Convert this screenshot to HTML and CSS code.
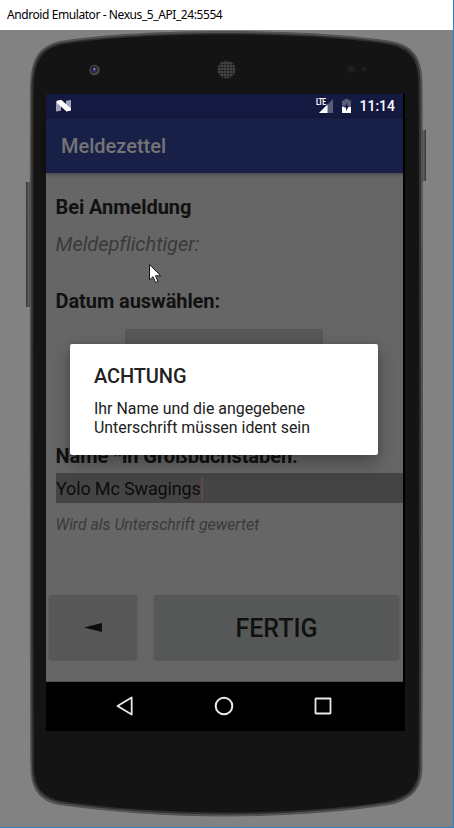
FILE: index.html
```html
<!DOCTYPE html>
<html lang="de">
<head>
<meta charset="utf-8">
<title>Android Emulator - Nexus_5_API_24:5554</title>
<link rel="stylesheet" href="styles.css">
</head>
<body>
<div class="window">
  <header class="titlebar"><span>Android Emulator - Nexus_5_API_24:5554</span></header>
  <main class="device">
    <svg class="shell" width="453" height="797" viewBox="0 30 453 797" aria-hidden="true">
      <defs>
        <linearGradient id="key" x1="0" x2="1" y1="0" y2="0"><stop offset="0" stop-color="#333"/><stop offset=".55" stop-color="#626262"/><stop offset="1" stop-color="#303030"/></linearGradient>
        <pattern id="mesh" width="3" height="3" patternUnits="userSpaceOnUse"><rect width="3" height="3" fill="#484848"/><circle cx="1.5" cy="1.5" r="1.1" fill="#181818"/></pattern>
      </defs>
      <rect x="26" y="182" width="5" height="125" fill="url(#key)"/>
      <rect x="421" y="130" width="5" height="51" fill="url(#key)"/>
      <path d="M30 90C30.500 63 35 47 60 41C105 34 165 31 226 31C285 31 345 34 388 40.500C413 44 422 57 422.500 82C423.200 180 423.200 670 422.500 768C422 790 410 801 389 805C340 812.500 280 816.500 226 816.500C170 816.500 110 812 59 805C40 801 31 790 30.500 768C29.800 670 29.800 180 30 90Z" fill="#505050"/>
      <path d="M31 90C31.500 64 36 48.500 60 42.500C105 35.500 165 32.500 226 32.500C285 32.500 345 35.500 388 42C412 45.500 420.500 58 421 82C421.700 180 421.700 670 421 768C420.500 789 409 799.500 388 803.500C340 811 280 815 226 815C170 815 110 810.500 60 803.500C41 799 32 789 31.500 768C30.800 670 30.800 180 31 90Z" fill="#313131" stroke="#6a6a6a" stroke-width=".5"/>
      <path d="M33.500 90C34 66 38 50 61 44.500C105 37.500 165 34.500 226 34.500C285 34.500 345 37.500 386 44C410 48 418 60 418.500 82C419.200 180 419.200 670 418.500 768C418 787 408 797 387 801.500C340 809 280 812.500 226 812.500C170 812.500 110 808.500 61 801C42 797 34.500 787 34 768C33 670 33 180 33.500 90Z" fill="#141414"/>
      <circle cx="94.500" cy="70" r="5.200" fill="#4c4c4c"/><circle cx="94" cy="69.500" r="3.700" fill="#262637"/><circle cx="94" cy="70" r="1.800" fill="#35358c"/><circle cx="94.500" cy="69" r=".8" fill="#c8c8dd"/>
      <circle cx="226.500" cy="69.500" r="9" fill="url(#mesh)"/>
      <circle cx="351" cy="69" r="4" fill="#1d1d1d"/><circle cx="351" cy="69" r="1.500" fill="#242424"/><circle cx="364" cy="69" r="2.500" fill="#1f1f1f"/>
    </svg>

    <section class="screen">
      <div class="statusbar">
        <svg class="n-logo" width="16" height="12" viewBox="0 0 16 12"><path d="M0 1.200L5 0V10.800L0 11.500ZM10 .7L15 0V10L10 11.500Z" fill="#a1a3b5"/><path d="M1 .7L5.500 0L15 8.500V10.500L10.500 11.500L1 3Z" fill="#fff"/></svg>
        <div class="signal"><span class="lte">LTE</span>
          <svg width="14" height="14" viewBox="0 0 14 14"><path d="M0 14L14 0V14Z" fill="#595c79"/><path d="M0 14L8.500 5.500V14Z" fill="#fff"/></svg>
        </div>
        <svg class="battery" width="9" height="14" viewBox="0 0 9 14"><path d="M2.500 0H6.500V1.500H9V8H0V1.500H2.500Z" fill="#5c5e79"/><path d="M0 8H9V14H0Z" fill="#fff"/><path d="M5.500 3.500L2 8.500H4V12L7 7H5.100Z" fill="#141941"/></svg>
        <time>11:14</time>
      </div>
      <div class="appbar"><h1>Meldezettel</h1></div>
      <div class="content">
        <h2 class="registration">Bei Anmeldung</h2>
        <p class="person">Meldepflichtiger:</p>
        <h2 class="date">Datum auswählen:</h2>
        <div class="date-field"></div>
        <h2 class="name-label">Name *in Großbuchstaben:</h2>
        <div class="input"><span>Yolo Mc Swagings</span><i class="caret"></i></div>
        <p class="hint">Wird als Unterschrift gewertet</p>
        <div class="actions">
          <button class="back" aria-label="Zurück"><svg width="18" height="9" viewBox="0 0 18 9"><path d="M0 4.500L18 0V9Z" fill="#0d0d0d"/></svg></button>
          <button class="done"><span>FERTIG</span></button>
        </div>
      </div>
      <nav class="navbar">
        <svg width="18" height="20" viewBox="0 0 18 20"><path d="M1.500 10L15.700 1.500V18.500Z" fill="none" stroke="#e8e8e8" stroke-width="1.800" stroke-linejoin="round"/></svg>
        <svg width="20" height="20" viewBox="0 0 20 20"><circle cx="10" cy="10" r="8.300" fill="none" stroke="#e8e8e8" stroke-width="2"/></svg>
        <svg width="18" height="18" viewBox="0 0 18 18"><rect x="1.500" y="1.500" width="15" height="15" rx=".4" fill="none" stroke="#e8e8e8" stroke-width="1.800"/></svg>
      </nav>
    </section>
    <div class="dialog" role="alertdialog">
      <h2>ACHTUNG</h2>
      <p>Ihr Name und die angegebene<br>Unterschrift müssen ident sein</p>
    </div>
    <svg class="cursor" width="13" height="20" viewBox="0 0 13 20"><path d="M.5 .5V16L4 12.700L6.600 18.500L9 17.400L6.500 11.800H11.700Z" fill="#fff" stroke="#161620" stroke-width="1"/></svg>
  </main>
</div>
</body>
</html>
```
FILE: styles.css
```css
* { box-sizing: border-box; }
body { margin: 0; font-family: Roboto, sans-serif; }
h1, h2, p { margin: 0; white-space: nowrap; }
svg { display: block; flex: none; }

.window {
  width: 454px;
  height: 828px;
  overflow: hidden;
  background: #828282;
  border-right: 1px solid #2f82c5;
  border-bottom: 1px solid #2f82c5;
}
.titlebar {
  height: 30px;
  padding-left: 7px;
  background: #fff;
  color: #000;
  font: 12px/30px "Noto Sans", sans-serif;
  letter-spacing: -0.42px;
  white-space: nowrap;
}
.device { position: relative; height: 797px; padding: 64px 0 0 46px; }
.shell { position: absolute; left: 0; top: 0; }

.screen {
  position: relative;
  width: 359px;
  height: 637px;
  background: #000;
}
.statusbar {
  display: flex;
  align-items: center;
  width: 357px;
  height: 24px;
  padding: 0 8px 0 10px;
  background: #141941;
  color: #fff;
}
.signal { display: flex; align-items: flex-end; height: 14px; margin: -1px 0 0 auto; }
.lte {
  align-self: flex-start;
  width: 3px;
  font-size: 9px;
  line-height: 7px;
  font-weight: 700;
  letter-spacing: -0.6px;
  transform: scaleX(.75);
  transform-origin: left top;
}
.battery { margin: -1px 8px 0 9px; }
time { font-size: 14px; font-weight: 500; }
.appbar {
  position: relative;
  display: flex;
  align-items: center;
  width: 357px;
  height: 55px;
  padding-left: 15px;
  background: #192048;
  box-shadow: 0 1px 5px rgba(0, 0, 0, .4);
}
.appbar h1 { color: #747474; font-size: 20px; font-weight: 500; }

.content {
  width: 357px;
  height: 509px;
  padding-top: 22px;
  background: #666;
  border-bottom: 1px solid #505050;
}
.content h2 {
  padding-left: 9.5px;
  color: #111;
  font-size: 20px;
  line-height: 24px;
  font-weight: 700;
  letter-spacing: -0.07px;
}
.content p { padding-left: 9.5px; color: #3a3a3a; font-style: italic; }
.content .person { margin-top: 12px; font-size: 20px; line-height: 26px; letter-spacing: -0.04px; }
.content .date { margin-top: 32px; }
.date-field { width: 198px; height: 86px; margin: 16px 0 0 79px; background: #575757; }
.content .name-label { margin-top: 29px; }
.input {
  display: flex;
  align-items: center;
  height: 30px;
  margin: 5px 0 0 10px;
  background: #444;
  color: #0c0c0c;
  font-size: 18px;
  letter-spacing: -0.15px;
}
.caret { width: 2px; height: 23px; margin-left: 0; background: #684650; }
.content .hint { margin-top: 10px; font-size: 15.85px; line-height: 23px; }
.actions { display: flex; gap: 17px; margin-top: 59px; padding: 0 4px 0 3px; }
button {
  display: flex;
  align-items: center;
  justify-content: center;
  height: 64px;
  padding: 0;
  border: 0;
  border-radius: 2px;
  background: #575757;
  color: #111;
  font-family: inherit;
  box-shadow: 0 1px 2px rgba(0, 0, 0, .25);
}
.back { width: 88px; }
.done { flex: 1; padding-top: 2px; background: #555857; font-size: 25px; font-weight: 500; }
.navbar {
  display: flex;
  align-items: center;
  justify-content: space-between;
  height: 48px;
  padding: 0 73px 0 70px;
}

.dialog {
  position: absolute;
  left: 70px;
  top: 314px;
  width: 308px;
  height: 111px;
  padding: 19px 24px 0;
  border-radius: 2px;
  background: #fff;
  color: #212121;
  box-shadow: 0 8px 18px rgba(0, 0, 0, .3), 0 0 5px rgba(0, 0, 0, .15);
}
.dialog h2 { font-size: 20px; line-height: 26px; font-weight: 500; letter-spacing: -0.1px; }
.dialog p { margin-top: 9.5px; font-size: 15.9px; line-height: 19px; }
.cursor { position: absolute; left: 149px; top: 234px; }
```
